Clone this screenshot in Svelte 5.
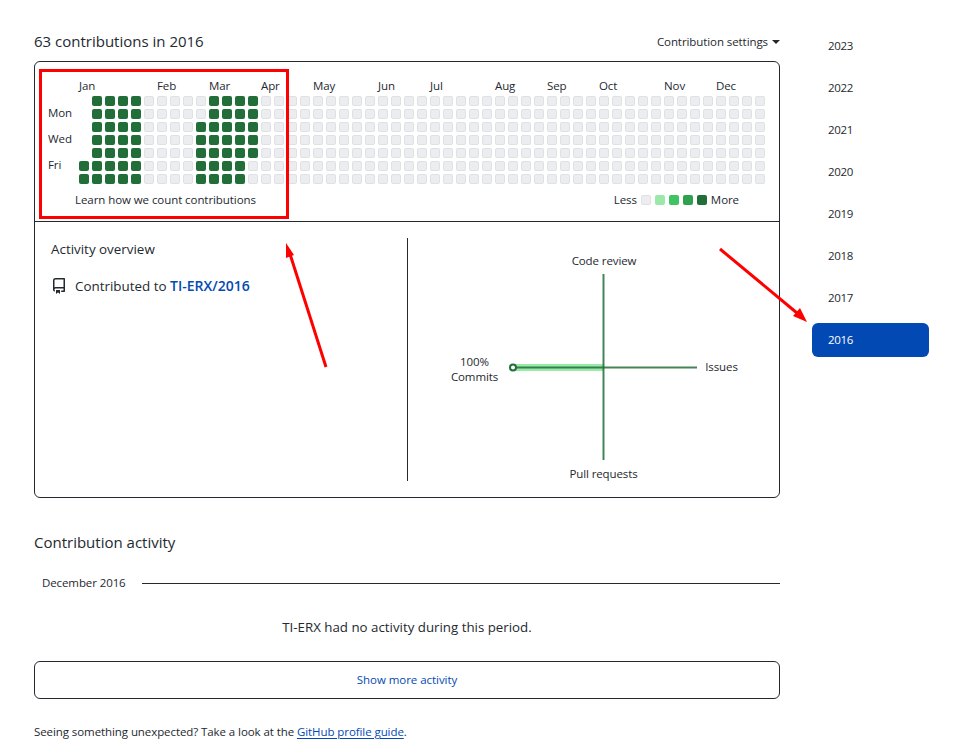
<script>
  const months = [['Jan',1],['Feb',7],['Mar',11],['Apr',15],['May',19],['Jun',24],['Jul',28],['Aug',33],['Sep',37],['Oct',41],['Nov',46],['Dec',50]];
  const years = [2023,2022,2021,2020,2019,2018,2017,2016];
  function green(c, r) {
    if (c >= 1 && c <= 4) return true;
    if (c === 0) return r >= 5;
    if (c === 9) return r >= 2;
    if (c >= 10 && c <= 12) return true;
    if (c === 13) return r <= 4;
    return false;
  }
  const cells = [];
  for (let c = 0; c < 53; c++) {
    for (let r = 0; r < 7; r++) {
      if (c === 0 && r < 5) { cells.push('none'); continue; }
      cells.push(green(c, r) ? 'on' : 'off');
    }
  }
</script>

<div class="page">
  <main class="main">
    <header class="head">
      <h2 class="title">63 contributions in 2016</h2>
      <span class="settings">Contribution settings<i class="caret"></i></span>
    </header>

    <section class="card">
      <div class="cal">
        <div class="months">
          {#each months as m}
            <span class="month" style="grid-column: {m[1]}">{m[0]}</span>
          {/each}
        </div>
        <div class="calbody">
          <div class="days">
            <span></span><span>Mon</span><span></span><span>Wed</span><span></span><span>Fri</span><span></span>
          </div>
          <div class="grid">
            {#each cells as c}
              <span class="cell {c}"></span>
            {/each}
          </div>
        </div>
        <div class="calfoot">
          <span>Learn how we count contributions</span>
          <div class="legend">
            <span class="less">Less</span>
            <span class="cell off"></span>
            <span class="cell l1"></span>
            <span class="cell l2"></span>
            <span class="cell l3"></span>
            <span class="cell on"></span>
            <span class="more">More</span>
          </div>
        </div>
      </div>

      <div class="overview">
        <div class="left">
          <h3 class="ovtitle">Activity overview</h3>
          <div class="contrib">
            <svg class="repo" viewBox="0 0 16 16" width="16" height="16" aria-hidden="true">
              <path fill="#24292f" d="M2 2.500A2.500 2.500 0 0 1 4.500 0h8.750a.75.75 0 0 1 .75.75v12.500a.75.75 0 0 1-.75.75h-2.500a.75.75 0 0 1 0-1.500h1.750v-2h-8a1 1 0 0 0-.714 1.700.75.75 0 1 1-1.072 1.050A2.495 2.495 0 0 1 2 11.500Zm10.500-1h-8a1 1 0 0 0-1 1v6.708A2.486 2.486 0 0 1 4.500 9h8ZM5 12.250a.25.25 0 0 1 .25-.25h3.500a.25.25 0 0 1 .25.25v3.250a.25.25 0 0 1-.4.2l-1.450-1.087a.249.249 0 0 0-.3 0L5.400 15.700a.25.25 0 0 1-.4-.2Z"/>
            </svg>
            <span>Contributed to <a class="repolink" href="#top">TI-ERX/2016</a></span>
          </div>
        </div>
        <div class="right">
          <svg class="radar" viewBox="0 0 371 243" width="371" height="243" aria-hidden="true">
            <rect x="104" y="126" width="92" height="7" fill="#9be9a8"/>
            <line x1="195.500" y1="36" x2="195.500" y2="222" stroke="#216e39" stroke-opacity=".85" stroke-width="2"/>
            <line x1="105" y1="129.500" x2="289" y2="129.500" stroke="#216e39" stroke-opacity=".85" stroke-width="2"/>
            <circle cx="105" cy="129.500" r="3" fill="#fff" stroke="#216e39" stroke-width="2"/>
          </svg>
          <span class="axis code">Code review</span>
          <span class="axis commits">100%<br>Commits</span>
          <span class="axis issues">Issues</span>
          <span class="axis pulls">Pull requests</span>
        </div>
      </div>
    </section>

    <h2 class="activity">Contribution activity</h2>
    <div class="period">
      <span>December 2016</span>
      <i class="rule"></i>
    </div>
    <p class="none">TI-ERX had no activity during this period.</p>
    <div class="more-btn"><span class="more-label">Show more activity</span></div>
    <p class="foot">Seeing something unexpected? Take a look at the <a class="guide" href="#top">GitHub profile guide</a>.</p>
  </main>

  <nav class="years">
    {#each years as y}
      <span class="year" class:active={y === 2016}>{y}</span>
    {/each}
  </nav>

  <svg class="marks" width="973" height="752" viewBox="0 0 973 752" aria-hidden="true">
    <rect x="40.500" y="70.500" width="247" height="147" fill="none" stroke="#f00" stroke-width="3"/>
    <line x1="326" y1="367" x2="290" y2="254" stroke="#f00" stroke-width="3"/>
    <polygon points="286,243 286,258 294,255" fill="#f00"/>
    <line x1="720" y1="249" x2="797" y2="313" stroke="#f00" stroke-width="3"/>
    <polygon points="807,322 793,316 800,308" fill="#f00"/>
  </svg>
</div>

<style>
  :global(body) { margin: 0; background: #fff; }
  .page {
    position: relative;
    display: flex;
    align-items: flex-start;
    gap: 32px;
    width: 973px;
    height: 752px;
    overflow: hidden;
    padding-left: 34px;
    box-sizing: border-box;
    font-family: "Open Sans", "Noto Sans", sans-serif;
    font-size: 12px;
    color: #24292f;
  }
  .main { width: 746px; flex: none; }
  .head {
    display: flex;
    justify-content: space-between;
    align-items: center;
    height: 61px;
    padding-top: 31px;
    padding-bottom: 9px;
    box-sizing: border-box;
  }
  .title, .activity {
    margin: 0;
    font-size: 15px;
    font-weight: 400;
    line-height: 21px;
  }
  .settings { font-size: 11.500px; letter-spacing: -0.08px; display: flex; align-items: center; }
  .caret {
    width: 0; height: 0;
    margin-left: 4px;
    border: 4px solid transparent;
    border-top-color: #24292f;
    border-bottom-width: 0;
  }
  .card {
    border: 1px solid #24292f;
    border-radius: 6px;
    height: 437px;
    box-sizing: border-box;
  }
  .cal {
    height: 160px;
    box-sizing: border-box;
    border-bottom: 1px solid #24292f;
    padding: 15px 14px 0 13px;
  }
  .months {
    display: grid;
    grid-template-columns: repeat(53, 10px);
    column-gap: 3px;
    margin-left: 31px;
    height: 19px;
    line-height: 17px;
    font-size: 11.500px;
    letter-spacing: -0.1px;
  }
  .month { grid-row: 1; white-space: nowrap; }
  .calbody { display: flex; }
  .days {
    width: 31px;
    flex: none;
    display: grid;
    grid-template-rows: repeat(7, 10px);
    row-gap: 3px;
    font-size: 11.500px;
    letter-spacing: -0.1px;
    line-height: 8px;
  }
  .grid {
    display: grid;
    grid-template-rows: repeat(7, 10px);
    grid-auto-flow: column;
    grid-auto-columns: 10px;
    gap: 3px;
  }
  .cell {
    display: block;
    width: 10px;
    height: 10px;
    box-sizing: border-box;
    border-radius: 2px;
  }
  .cell.none { visibility: hidden; }
  .cell.off { background: #ebedf0; outline: 1px solid rgba(27,31,35,.06); outline-offset: -1px; }
  .cell.on { background: #216e39; }
  .cell.l1 { background: #9be9a8; }
  .cell.l2 { background: #40c463; }
  .cell.l3 { background: #30a14e; }
  .calfoot {
    display: flex;
    justify-content: space-between;
    align-items: center;
    padding: 7px 26px 0 27px;
    font-size: 11.500px;
    letter-spacing: -0.07px;
    line-height: 16px;
  }
  .legend { display: flex; align-items: center; gap: 4px; margin-top: 1px; }
  .overview { display: flex; height: 275px; padding-top: 16px; box-sizing: border-box; }
  .left { width: 373px; flex: none; height: 243px; padding-left: 16px; box-sizing: border-box; border-right: 1px solid #24292f; }
  .ovtitle { margin: 1px 0 0; font-size: 13.400px; font-weight: 400; line-height: 20px; }
  .contrib { display: flex; align-items: center; gap: 8px; margin-top: 17px; font-size: 13.400px; line-height: 20px; }
  .repo { flex: none; }
  .repolink { color: #0349b4; font-weight: 600; font-size: 14px; text-decoration: none; }
  .right { position: relative; width: 371px; height: 243px; }
  .radar { display: block; }
  .axis { position: absolute; font-size: 11.500px; letter-spacing: -0.1px; line-height: 15px; white-space: nowrap; transform: translateX(-50%); text-align: center; }
  .code { left: 196px; top: 15px; }
  .commits { left: 66.500px; top: 116px; }
  .issues { left: 313.500px; top: 121px; }
  .pulls { left: 195.500px; top: 228px; }
  .activity { margin-top: 34px; }
  .period { display: flex; align-items: center; gap: 16px; margin-top: 22px; padding-left: 8px; font-size: 11.500px; letter-spacing: -0.1px; line-height: 16px; }
  .rule { flex: 1; height: 1px; background: #24292f; }
  .none { margin: 26px 0 0; text-align: center; font-size: 13.300px; line-height: 20px; }
  .more-btn {
    margin-top: 24px;
    height: 38px;
    box-sizing: border-box;
    border: 1px solid #24292f;
    border-radius: 6px;
    display: flex;
    align-items: center;
    justify-content: center;
    padding-bottom: 2px;
    color: #0349b4;
    font-size: 11.500px;
    letter-spacing: -0.05px;
  }
  .foot { margin: 25px 0 0; font-size: 11.500px; letter-spacing: -0.08px; line-height: 16px; }
  .guide { color: #0349b4; text-decoration: underline; text-underline-offset: 2px; }
  .years { width: 117px; flex: none; display: flex; flex-direction: column; gap: 8px; padding-top: 29px; }
  .year {
    height: 34px;
    line-height: 34px;
    padding-left: 16px;
    border-radius: 6px;
    font-size: 11.500px;
    letter-spacing: -0.3px;
  }
  .year.active { background: #0349b4; color: #fff; }
  .marks { position: absolute; left: 0; top: 0; pointer-events: none; }
</style>
